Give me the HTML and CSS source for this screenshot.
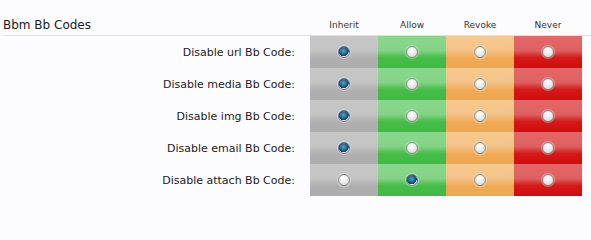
FILE: index.html
```html
<!DOCTYPE html>
<html>
<head>
<meta charset="utf-8">
<link rel="stylesheet" href="styles.css">
</head>
<body>
<div class="perm">
  <div class="head">
    <div class="title">Bbm Bb Codes</div>
    <div class="col-label">Inherit</div>
    <div class="col-label">Allow</div>
    <div class="col-label">Revoke</div>
    <div class="col-label">Never</div>
  </div>
  <div class="row">
    <div class="label">Disable url Bb Code:</div>
    <div class="cell inherit"><span class="radio on"></span></div>
    <div class="cell allow"><span class="radio"></span></div>
    <div class="cell revoke"><span class="radio"></span></div>
    <div class="cell never"><span class="radio"></span></div>
  </div>
  <div class="row">
    <div class="label">Disable media Bb Code:</div>
    <div class="cell inherit"><span class="radio on"></span></div>
    <div class="cell allow"><span class="radio"></span></div>
    <div class="cell revoke"><span class="radio"></span></div>
    <div class="cell never"><span class="radio"></span></div>
  </div>
  <div class="row">
    <div class="label">Disable img Bb Code:</div>
    <div class="cell inherit"><span class="radio on"></span></div>
    <div class="cell allow"><span class="radio"></span></div>
    <div class="cell revoke"><span class="radio"></span></div>
    <div class="cell never"><span class="radio"></span></div>
  </div>
  <div class="row">
    <div class="label">Disable email Bb Code:</div>
    <div class="cell inherit"><span class="radio on"></span></div>
    <div class="cell allow"><span class="radio"></span></div>
    <div class="cell revoke"><span class="radio"></span></div>
    <div class="cell never"><span class="radio"></span></div>
  </div>
  <div class="row">
    <div class="label">Disable attach Bb Code:</div>
    <div class="cell inherit"><span class="radio"></span></div>
    <div class="cell allow"><span class="radio on"></span></div>
    <div class="cell revoke"><span class="radio"></span></div>
    <div class="cell never"><span class="radio"></span></div>
  </div>
</div>
</body>
</html>
```

FILE: styles.css
```css
html, body {
  margin: 0;
  padding: 0;
  background: #fcfcfe;
}
body {
  font-family: "DejaVu Sans", Verdana, sans-serif;
  color: #222;
}
.perm {
  width: 591px;
}
.head {
  display: grid;
  grid-template-columns: 307px repeat(4, 68px);
  margin-left: 3px;
  height: 35px;
  border-bottom: 1px solid #d6e4f0;
  align-items: end;
}
.title {
  font-size: 12px;
  padding-bottom: 3px;
  color: #1a1a1a;
}
.col-label {
  font-size: 9px;
  text-align: center;
  padding-bottom: 5px;
  color: #333;
}
.row {
  display: grid;
  grid-template-columns: 310px repeat(4, 68px);
  height: 32px;
}
.label {
  font-size: 11px;
  text-align: right;
  padding-right: 15px;
  display: flex;
  align-items: center;
  justify-content: flex-end;
}
.cell {
  display: flex;
  align-items: center;
  justify-content: center;
}
.inherit {
  background: linear-gradient(to bottom, #c7c7c7 0%, #c4c4c4 45%, #b0b0b0 68%, #adadad 100%);
}
.allow {
  background: linear-gradient(to bottom, #88d68a 0%, #84d486 45%, #45bd48 68%, #3fba42 100%);
}
.revoke {
  background: linear-gradient(to bottom, #f6c990 0%, #f4c388 45%, #f0aa55 68%, #efa64f 100%);
}
.never {
  background: linear-gradient(to bottom, #e46868 0%, #e06060 45%, #d51818 68%, #d20c0c 100%);
}
.radio {
  width: 10px;
  height: 10px;
  border-radius: 50%;
  border: 1px solid #8a8a8a;
  background: radial-gradient(circle at 45% 35%, #ffffff 0%, #eeeeee 40%, #c8c8c8 100%);
  box-shadow: 0 0 0 1px rgba(255,255,255,0.35);
}
.radio.on {
  border-color: #6a7a86;
  background: radial-gradient(circle at 45% 40%, #5aa0c8 0%, #1c5f8c 45%, #0e3e60 62%, #ffffff 66%, #e8eef2 100%);
}
```
